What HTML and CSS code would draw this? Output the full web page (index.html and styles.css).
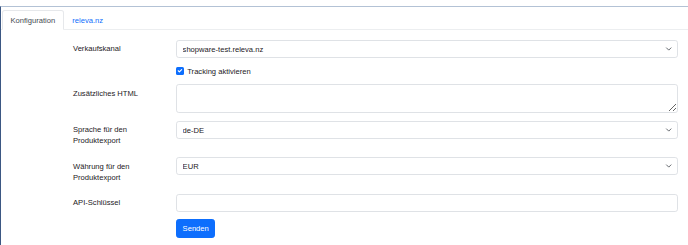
FILE: index.html
```html
<!DOCTYPE html>
<html lang="de">
<head>
  <meta charset="UTF-8" />
  <meta name="viewport" content="width=device-width, initial-scale=1.0"/>
  <title>releva.nz Konfiguration</title>
  <link rel="stylesheet" href="styles.css">
</head>
<body>

  <div class="frame">
    <ul class="nav-tabs">
      <li><a href="#" class="active">Konfiguration</a></li>
      <li><a href="#">releva.nz</a></li>
    </ul>

    <div class="tab-content">
      <form class="config-form">
        <div class="form-row">
          <label class="col-label" for="channel">Verkaufskanal</label>
          <div class="select-wrap">
            <select id="channel" class="form-select">
              <option>shopware-test.releva.nz</option>
            </select>
            <svg class="chevron" viewBox="0 0 16 16"><path d="M2 5l6 6 6-6" fill="none" stroke="#343a40" stroke-width="2" stroke-linecap="round" stroke-linejoin="round"/></svg>
          </div>
        </div>

        <div class="form-row">
          <span></span>
          <div class="form-check">
            <span class="check-box">
              <svg viewBox="0 0 20 20"><path d="M6 10l3 3 6-6" fill="none" stroke="#fff" stroke-width="3" stroke-linecap="round" stroke-linejoin="round"/></svg>
            </span>
            <label>Tracking aktivieren</label>
          </div>
        </div>

        <div class="form-row">
          <label class="col-label" for="html">Zusätzliches HTML</label>
          <textarea id="html" class="form-control area"></textarea>
        </div>

        <div class="form-row">
          <label class="col-label" for="lang">Sprache für den<br>Produktexport</label>
          <div class="select-wrap">
            <select id="lang" class="form-select">
              <option>de-DE</option>
            </select>
            <svg class="chevron" viewBox="0 0 16 16"><path d="M2 5l6 6 6-6" fill="none" stroke="#343a40" stroke-width="2" stroke-linecap="round" stroke-linejoin="round"/></svg>
          </div>
        </div>

        <div class="form-row">
          <label class="col-label" for="currency">Währung für den<br>Produktexport</label>
          <div class="select-wrap">
            <select id="currency" class="form-select">
              <option>EUR</option>
            </select>
            <svg class="chevron" viewBox="0 0 16 16"><path d="M2 5l6 6 6-6" fill="none" stroke="#343a40" stroke-width="2" stroke-linecap="round" stroke-linejoin="round"/></svg>
          </div>
        </div>

        <div class="form-row">
          <label class="col-label" for="apikey">API-Schlüssel</label>
          <input id="apikey" type="text" class="form-control">
        </div>

        <div class="form-row">
          <span></span>
          <div><button type="button" class="btn-primary">Senden</button></div>
        </div>
      </form>
    </div>
  </div>

</body>
</html>
```

FILE: styles.css
```css
body {
  margin: 0;
  background: #fff;
  font-family: "Liberation Sans", Arial, sans-serif;
  font-size: 7.6px;
  line-height: 11.25px;
  color: #1d2024;
}
.frame {
  margin-top: 6px;
  border-top: 1px solid #b3c2d5;
  border-left: 1px solid #3b5783;
  height: 239px;
  box-sizing: border-box;
}
.nav-tabs {
  display: flex;
  list-style: none;
  margin: 0;
  padding: 3px 0 0 1px;
  border-bottom: 1px solid #eceef0;
}
.nav-tabs a {
  display: block;
  height: 20px;
  box-sizing: border-box;
  padding: 4px 7.5px;
  border: 1px solid transparent;
  border-radius: 2.8px 2.8px 0 0;
  margin-bottom: -1px;
  color: #0d6efd;
  text-decoration: none;
}
.nav-tabs a.active {
  color: #454b52;
  background: #fff;
  border-color: #e6e8eb #e6e8eb #fff;
}
.tab-content {
  padding: 10px 10px 0 72px;
}
.form-row {
  display: grid;
  grid-template-columns: 103px 502px;
  margin-bottom: 7.5px;
}
.col-label {
  padding: 3.3px 0;
}
.form-control, .form-select {
  display: block;
  width: 100%;
  box-sizing: border-box;
  height: 18px;
  padding: 2.8px 5.6px;
  font-family: inherit;
  font-size: 7.6px;
  line-height: 11.25px;
  color: #1d2024;
  background: #fff;
  border: 1px solid #dfe2e6;
  border-radius: 2.8px;
  outline: none;
}
.form-select {
  appearance: none;
  -webkit-appearance: none;
  padding-right: 18px;
}
.area {
  height: 29px;
  resize: vertical;
}
.select-wrap {
  position: relative;
}
.chevron {
  position: absolute;
  right: 6px;
  top: 6px;
  width: 7.5px;
  height: 6px;
  pointer-events: none;
}
.form-check {
  display: flex;
  align-items: center;
  height: 11.25px;
}
.check-box {
  width: 7.5px;
  height: 7.5px;
  margin-right: 3.75px;
  background: #0d6efd;
  border-radius: 1.5px;
  display: flex;
}
.check-box svg {
  width: 100%;
  height: 100%;
}
.btn-primary {
  height: 18.5px;
  font-family: inherit;
  font-size: 7.6px;
  line-height: 11.25px;
  padding: 2.8px 5.6px;
  color: #fff;
  background: #0d6efd;
  border: 1px solid #0d6efd;
  border-radius: 2.8px;
  cursor: pointer;
}
```
